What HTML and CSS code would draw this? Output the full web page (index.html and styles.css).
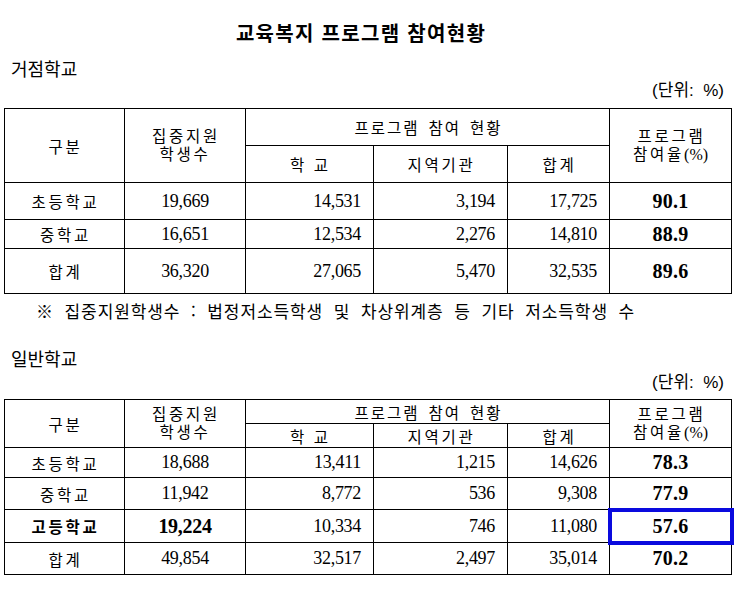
FILE: index.html
```html
<!DOCTYPE html>
<html lang="ko">
<head>
<meta charset="utf-8">
<title>교육복지 프로그램 참여현황</title>
<link rel="stylesheet" href="styles.css">
</head>
<body>
<div class="page">
  <h1 class="title">교육복지 프로그램 참여현황</h1>

  <h2 class="section">거점학교</h2>
  <div class="unit">(단위:&nbsp; %)</div>
  <table class="grid grid-a">
    <colgroup>
      <col class="c1"><col class="c2"><col class="c3"><col class="c4"><col class="c5"><col class="c6">
    </colgroup>
    <tr class="ha1">
      <th rowspan="2" class="ko">구분</th>
      <th rowspan="2" class="ko two">집중지원<br>학생수</th>
      <th colspan="3" class="ko wide">프로그램 참여 현황</th>
      <th rowspan="2" class="ko two">프로그램<br>참여율<span class="sym">(%)</span></th>
    </tr>
    <tr class="ha2">
      <th class="ko">학 교</th>
      <th class="ko">지역기관</th>
      <th class="ko">합계</th>
    </tr>
    <tr class="ra1">
      <td class="ko">초등학교</td><td class="mid">19,669</td><td class="num">14,531</td><td class="num">3,194</td><td class="num">17,725</td><td class="pct">90.1</td>
    </tr>
    <tr class="ra2">
      <td class="ko">중학교</td><td class="mid">16,651</td><td class="num">12,534</td><td class="num">2,276</td><td class="num">14,810</td><td class="pct">88.9</td>
    </tr>
    <tr class="ra3">
      <td class="ko">합계</td><td class="mid">36,320</td><td class="num">27,065</td><td class="num">5,470</td><td class="num">32,535</td><td class="pct">89.6</td>
    </tr>
  </table>
  <p class="note">※ 집중지원학생수 : 법정저소득학생 및 차상위계층 등 기타 저소득학생 수</p>

  <h2 class="section section-b">일반학교</h2>
  <div class="unit unit-b">(단위:&nbsp; %)</div>
  <table class="grid grid-b">
    <colgroup>
      <col class="c1"><col class="c2"><col class="c3"><col class="c4"><col class="c5"><col class="c6">
    </colgroup>
    <tr class="hb1">
      <th rowspan="2" class="ko">구분</th>
      <th rowspan="2" class="ko two">집중지원<br>학생수</th>
      <th colspan="3" class="ko wide">프로그램 참여 현황</th>
      <th rowspan="2" class="ko two">프로그램<br>참여율<span class="sym">(%)</span></th>
    </tr>
    <tr class="hb2">
      <th class="ko">학 교</th>
      <th class="ko">지역기관</th>
      <th class="ko">합계</th>
    </tr>
    <tr class="rb1">
      <td class="ko">초등학교</td><td class="mid">18,688</td><td class="num">13,411</td><td class="num">1,215</td><td class="num">14,626</td><td class="pct">78.3</td>
    </tr>
    <tr class="rb2">
      <td class="ko">중학교</td><td class="mid">11,942</td><td class="num">8,772</td><td class="num">536</td><td class="num">9,308</td><td class="pct">77.9</td>
    </tr>
    <tr class="rb3">
      <td class="ko strong">고등학교</td><td class="mid strong-num">19,224</td><td class="num">10,334</td><td class="num">746</td><td class="num">11,080</td><td class="pct highlight">57.6</td>
    </tr>
    <tr class="rb4">
      <td class="ko">합계</td><td class="mid">49,854</td><td class="num">32,517</td><td class="num">2,497</td><td class="num">35,014</td><td class="pct">70.2</td>
    </tr>
  </table>
</div>
</body>
</html>
```

FILE: styles.css
```css
html, body {
  margin: 0;
  padding: 0;
  background: #ffffff;
}

.page {
  width: 738px;
  height: 597px;
  padding: 21px 0 0 4px;
  box-sizing: border-box;
  color: #000;
  font-family: "Noto Sans CJK KR", "Liberation Sans", sans-serif;
}

.title {
  margin: 0;
  height: 24px;
  line-height: 24px;
  font-size: 20px;
  font-weight: 700;
  letter-spacing: 1.3px;
  text-align: center;
  padding-right: 20px;
}

.section {
  margin: 11px 0 0 7px;
  height: 24px;
  line-height: 24px;
  font-size: 18px;
  font-weight: 400;
}

.unit {
  margin: 1px 14px 0 0;
  height: 20px;
  line-height: 20px;
  font-size: 17px;
  text-align: right;
  font-family: "Liberation Sans", "Noto Sans CJK KR", sans-serif;
}

.grid {
  margin-top: 7px;
  border-collapse: collapse;
  table-layout: fixed;
  width: 727px;
  font-family: "Liberation Serif", "Noto Sans CJK KR", serif;
  font-size: 18px;
}

.grid th,
.grid td {
  border: 1px solid #000;
  padding: 0;
  text-align: center;
  vertical-align: middle;
  font-weight: 400;
  white-space: nowrap;
}

.c1 { width: 120px; }
.c2 { width: 121px; }
.c3 { width: 128px; }
.c4 { width: 134px; }
.c5 { width: 102px; }
.c6 { width: 122px; }

.grid .ko {
  font-size: 15.5px;
  letter-spacing: 2.8px;
  text-indent: 2px;
}

.grid .two {
  line-height: 18px;
}

.grid .sym {
  letter-spacing: 0;
  font-size: 16px;
}

.grid .wide {
  letter-spacing: 2px;
  word-spacing: 3px;
}

.grid .num {
  text-align: right;
  padding-right: 12px;
  letter-spacing: -0.3px;
}

.grid .mid {
  letter-spacing: -0.3px;
}

.grid .pct {
  font-weight: 700;
  font-size: 20px;
  letter-spacing: 0.3px;
}

.grid .strong {
  font-weight: 700;
}

.grid .strong-num {
  font-weight: 700;
  font-size: 20px;
}

.grid .highlight {
  outline: 4px solid #0a0ade;
  outline-offset: -2px;
}

/* table A row heights */
.ha1 { height: 37px; }
.ha2 { height: 37px; }
.ra1 { height: 37px; }
.ra2 { height: 29px; }
.ra3 { height: 45px; }

/* table B row heights */
.hb1 { height: 24px; }
.hb2 { height: 24px; }
.rb1 { height: 30px; }
.rb2 { height: 32px; }
.rb3 { height: 33px; }
.rb4 { height: 32px; }

.note {
  margin: 6px 0 0 32px;
  height: 22px;
  line-height: 22px;
  font-size: 17px;
  letter-spacing: 0.9px;
  word-spacing: 5px;
}

.section-b {
  margin-top: 24px;
}

.unit-b {
  margin-top: 3px;
}

.grid-b {
  margin-top: 6px;
}
```
